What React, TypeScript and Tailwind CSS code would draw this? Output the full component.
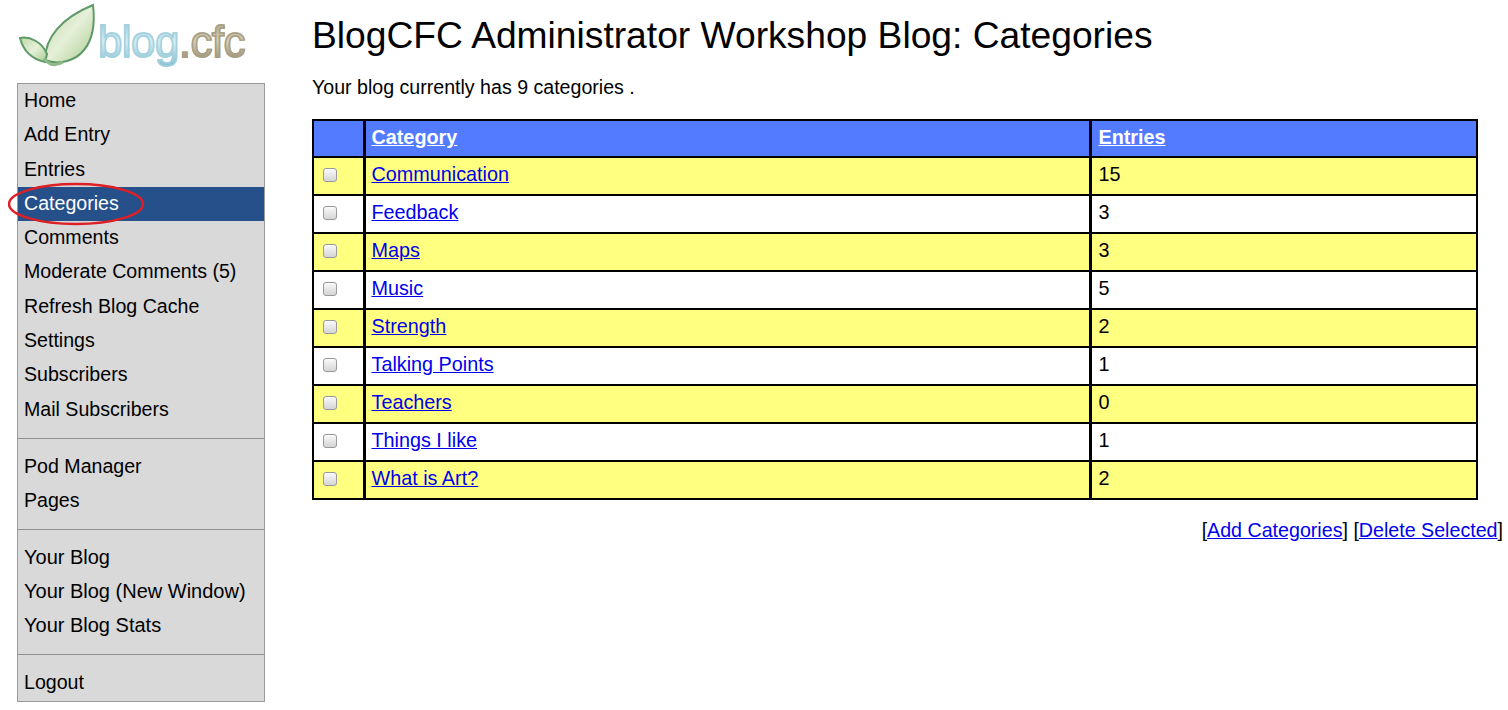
import React from "react";

const menuGroups = [
  {
    items: ["Home", "Add Entry", "Entries", "Categories", "Comments", "Moderate Comments (5)", "Refresh Blog Cache", "Settings", "Subscribers", "Mail Subscribers"],
    className: "pb-[11px]",
  },
  { items: ["Pod Manager", "Pages"], className: "pt-[11px] pb-[10px]" },
  { items: ["Your Blog", "Your Blog (New Window)", "Your Blog Stats"], className: "pt-[11px] pb-[11px] text-[20px]" },
  { items: ["Logout"], className: "pt-[11px]" },
];

const categories = [
  { name: "Communication", entries: 15 },
  { name: "Feedback", entries: 3 },
  { name: "Maps", entries: 3 },
  { name: "Music", entries: 5 },
  { name: "Strength", entries: 2 },
  { name: "Talking Points", entries: 1 },
  { name: "Teachers", entries: 0 },
  { name: "Things I like", entries: 1 },
  { name: "What is Art?", entries: 2 },
];

const Logo = () => (
  <div className="relative flex h-[83px] items-start">
    <svg width="84" height="72" viewBox="0 0 84 72" className="ml-[2px] shrink-0">
      <defs>
        <linearGradient id="leaf" x1="0" y1="0" x2="1" y2="1">
          <stop offset="0" stopColor="#bcd8a6" />
          <stop offset="0.5" stopColor="#e6f0d8" />
          <stop offset="1" stopColor="#a9cc91" />
        </linearGradient>
      </defs>
      <path
        d="M26 60 C26 38 42 18 74 5 C76 22 75 38 65 50 C57 60 41 66 26 60 Z"
        fill="url(#leaf)"
        stroke="#5f9a68"
        strokeWidth="2"
      />
      <path
        d="M26 62 C17 60 5 54 1 38 C11 36 23 42 28 54 Z"
        fill="url(#leaf)"
        stroke="#5f9a68"
        strokeWidth="2"
      />
      <path d="M25 58 C30 66 37 66 44 62" fill="none" stroke="#8db889" strokeWidth="3" />
    </svg>
    <span className="absolute left-[81px] top-[17px] bg-gradient-to-b from-[#8ec6d8] via-[#d4edf3] to-[#7fbcd0] bg-clip-text font-['Liberation_Sans',sans-serif] text-[44px] leading-[50px] tracking-[-0.6px] text-transparent [-webkit-text-stroke:1.5px_#a3d0de]">
      blog
      <span className="bg-gradient-to-b from-[#a89c80] via-[#d6cfb8] to-[#8a7d5d] bg-clip-text text-transparent [-webkit-text-stroke:1.5px_#a99e84]">.cfc</span>
    </span>
  </div>
);

const Sidebar = () => (
  <aside className="relative ml-[17px] w-[248px] shrink-0">
    <Logo />
    <nav className="h-[619px] overflow-hidden border border-[#9a9a9a] bg-[#d9d9d9] text-[19.6px] text-black">
      {menuGroups.map((group, i) => (
        <ul key={i} className={`${group.className} ${i > 0 ? "border-t border-[#8f8f8f]" : ""}`}>
          {group.items.map((item) => (
            <li
              key={item}
              className={`h-[34.3px] pl-[6px] leading-[33.5px] ${item === "Categories" ? "bg-[#26508a] text-white" : ""}`}
            >
              {item}
            </li>
          ))}
        </ul>
      ))}
    </nav>
    {/* red marker round the current item */}
    <svg width="140" height="46" viewBox="0 0 140 46" className="absolute left-[-9px] top-[182px]">
      <ellipse cx="68" cy="22" rx="67" ry="20" fill="none" stroke="#dd1f26" strokeWidth="2.5" />
    </svg>
  </aside>
);

const CategoryTable = () => (
  <table className="mt-[20px] w-[1166px] table-fixed border-collapse text-[19.8px]">
    <thead>
      <tr className="h-[37px] bg-[#537bff] font-bold text-white">
        <th className="w-[51px] border-y-2 border-r-[3px] border-l-2 border-black" />
        <th className="w-[726px] border-x-[3px] border-y-2 border-black pb-[1px] pl-[6px] text-left font-bold">
          <a className="underline">Category</a>
        </th>
        <th className="border-y-2 border-r-2 border-l-[3px] border-black pb-[1px] pl-[7px] text-left font-bold">
          <a className="underline">Entries</a>
        </th>
      </tr>
    </thead>
    <tbody>
      {categories.map((c, i) => (
        <tr key={c.name} className={`h-[38px] ${i % 2 === 0 ? "bg-[#ffff80]" : "bg-white"}`}>
          <td className="border-y-2 border-r-[3px] border-l-2 border-black pb-[2px] pl-[9px] text-left">
            <span className="block h-[14px] w-[14px] rounded-[3px] border border-[#9a9a9a] bg-gradient-to-b from-[#fafafa] to-[#d4d4d4]" />
          </td>
          <td className="border-x-[3px] border-y-2 border-black pb-[2px] pl-[6px]">
            <a className="text-[#0000ee] underline">{c.name}</a>
          </td>
          <td className="border-y-2 border-r-2 border-l-[3px] border-black pb-[2px] pl-[7px] text-black">{c.entries}</td>
        </tr>
      ))}
    </tbody>
  </table>
);

export default function App() {
  return (
    <div className="flex h-[710px] w-[1508px] overflow-hidden bg-white font-['Liberation_Sans',Arial,sans-serif] text-black">
      <Sidebar />
      <main className="ml-[47px] flex-1 pr-[5px]">
        <h1 className="mt-[14px] text-[37.2px] leading-[42px] font-normal">BlogCFC Administrator Workshop Blog: Categories</h1>
        <p className="mt-[19px] text-[19.6px] leading-[24px]">Your blog currently has 9 categories .</p>
        <CategoryTable />
        <div className="mt-[18px] text-right text-[19.65px] leading-[24px]">
          [<a className="text-[#0000ee] underline">Add Categories</a>] [<a className="text-[#0000ee] underline">Delete Selected</a>]
        </div>
      </main>
    </div>
  );
}
